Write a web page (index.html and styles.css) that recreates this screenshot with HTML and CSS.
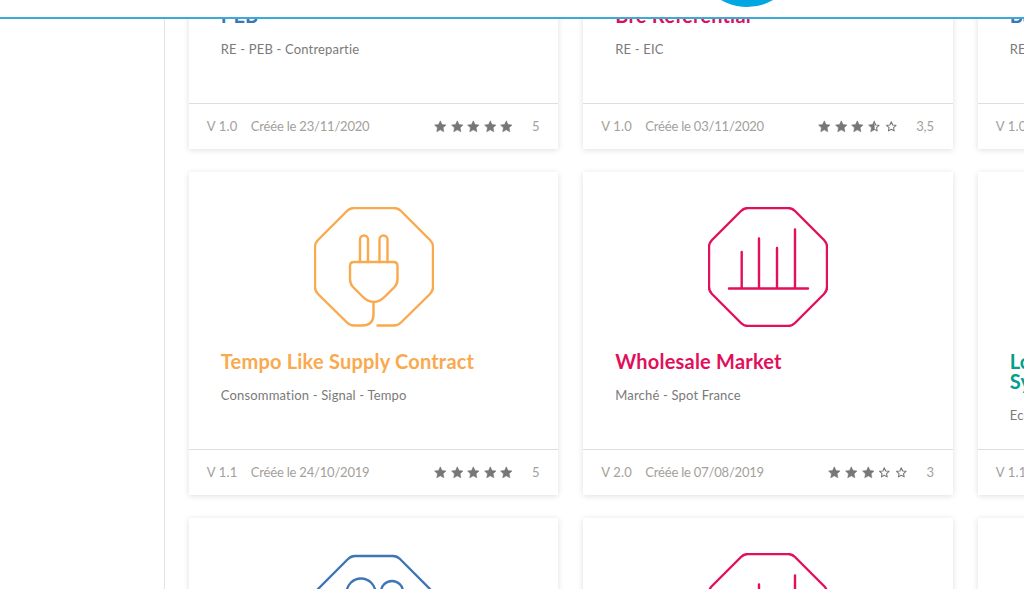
FILE: index.html
```html
<!DOCTYPE html>
<html lang="fr">
<head>
<meta charset="utf-8">
<title>Catalogue</title>
<link rel="stylesheet" href="styles.css">
</head>
<body>
<svg class="defs" aria-hidden="true">
  <symbol id="octagon" viewBox="0 0 120 120"><path d="M40 1H80Q84 1 87 4L116 33Q119 36 119 40V80Q119 84 116 87L87 116Q84 119 80 119H40Q36 119 33 116L4 87Q1 84 1 80V40Q1 36 4 33L33 4Q36 1 40 1Z"/></symbol>
  <symbol id="plug" viewBox="0 0 120 120"><path d="M63.500 118.500H80Q84 118.500 87 115.500L116 87Q119 84 119 80V40Q119 36 116 33L87 4Q84 1 80 1H40Q36 1 33 4L4 33Q1 36 1 40V80Q1 84 4 87L33 115.500Q36 118.500 40 118.500H48Q59.500 118.500 59.500 107V95"/><path d="M46 55V32.500A4 4 0 0 1 54 32.500V55M65.500 55V32.500A4 4 0 0 1 73.500 32.500V55"/><path d="M40 55H79.500Q83.500 55 83.500 59V72Q83.500 77 80.500 80L71 89.500Q65.500 95 60 95Q54 95 48.500 89.500L39 80Q36 77 36 72V59Q36 55 40 55Z"/></symbol>
  <symbol id="bars" viewBox="0 0 120 120"><path d="M40 1H80Q84 1 87 4L116 33Q119 36 119 40V80Q119 84 116 87L87 116Q84 119 80 119H40Q36 119 33 116L4 87Q1 84 1 80V40Q1 36 4 33L33 4Q36 1 40 1Z"/><path d="M21 81.500H100M33.700 81.500V45M51 81.500V31.500M69 81.500V41M87 81.500V22.500"/></symbol>
  <symbol id="sockets" viewBox="0 0 120 120"><path d="M41 3H79Q83 3 86 6L116 36Q119 39 119 43V80Q119 84 116 87L87 116Q84 119 80 119H40Q36 119 33 116L4 87Q1 84 1 80V43Q1 39 4 36L34 6Q37 3 41 3Z"/><circle cx="47" cy="40" r="14.500"/><circle cx="78" cy="39" r="11"/></symbol>
  <symbol id="star" viewBox="0 0 24 24"><path class="solid" d="M12 1.500L15.300 8.500L23 9.500L17.400 14.800L18.800 22.500L12 18.800L5.200 22.500L6.600 14.800L1 9.500L8.700 8.500Z"/></symbol>
  <symbol id="star-empty" viewBox="0 0 24 24"><path class="hollow" d="M12 3.500L14.600 9.400L21 10.200L16.300 14.500L17.500 20.800L12 17.700L6.500 20.800L7.700 14.500L3 10.200L9.400 9.400Z"/></symbol>
  <symbol id="star-half" viewBox="0 0 24 24"><path class="hollow" d="M12 3.500L14.600 9.400L21 10.200L16.300 14.500L17.500 20.800L12 17.700"/><path class="solid" d="M12 1.500V18.800L5.200 22.500L6.600 14.800L1 9.500L8.700 8.500Z"/></symbol>
</svg>

<header class="topbar"><span class="topbar-logo"></span></header>

<div class="app">
  <aside class="sidebar"></aside>
  <main class="grid">

    <article class="card tone-blue">
      <svg class="icon"><use href="#sockets"/></svg>
      <h2 class="title">PEB</h2>
      <p class="subtitle">RE - PEB - Contrepartie</p>
      <footer class="meta">
        <span class="version">V 1.0</span><span class="date">Créée le 23/11/2020</span>
        <span class="stars"><svg><use href="#star"/></svg><svg><use href="#star"/></svg><svg><use href="#star"/></svg><svg><use href="#star"/></svg><svg><use href="#star"/></svg></span>
        <span class="score">5</span>
      </footer>
    </article>

    <article class="card tone-pink">
      <svg class="icon"><use href="#bars"/></svg>
      <h2 class="title">Bre Referential</h2>
      <p class="subtitle">RE - EIC</p>
      <footer class="meta">
        <span class="version">V 1.0</span><span class="date">Créée le 03/11/2020</span>
        <span class="stars"><svg><use href="#star"/></svg><svg><use href="#star"/></svg><svg><use href="#star"/></svg><svg><use href="#star-half"/></svg><svg><use href="#star-empty"/></svg></span>
        <span class="score">3,5</span>
      </footer>
    </article>

    <article class="card tone-blue">
      <svg class="icon"><use href="#sockets"/></svg>
      <h2 class="title">Balancing</h2>
      <p class="subtitle">RE - Balancing</p>
      <footer class="meta">
        <span class="version">V 1.0</span><span class="date">Créée le 03/11/2020</span>
        <span class="stars"><svg><use href="#star"/></svg><svg><use href="#star"/></svg><svg><use href="#star"/></svg><svg><use href="#star"/></svg><svg><use href="#star"/></svg></span>
        <span class="score">5</span>
      </footer>
    </article>

    <article class="card tone-orange">
      <svg class="icon"><use href="#plug"/></svg>
      <h2 class="title">Tempo Like Supply Contract</h2>
      <p class="subtitle">Consommation - Signal - Tempo</p>
      <footer class="meta">
        <span class="version">V 1.1</span><span class="date">Créée le 24/10/2019</span>
        <span class="stars"><svg><use href="#star"/></svg><svg><use href="#star"/></svg><svg><use href="#star"/></svg><svg><use href="#star"/></svg><svg><use href="#star"/></svg></span>
        <span class="score">5</span>
      </footer>
    </article>

    <article class="card tone-pink">
      <svg class="icon"><use href="#bars"/></svg>
      <h2 class="title">Wholesale Market</h2>
      <p class="subtitle">Marché - Spot France</p>
      <footer class="meta">
        <span class="version">V 2.0</span><span class="date">Créée le 07/08/2019</span>
        <span class="stars"><svg><use href="#star"/></svg><svg><use href="#star"/></svg><svg><use href="#star"/></svg><svg><use href="#star-empty"/></svg><svg><use href="#star-empty"/></svg></span>
        <span class="score">3</span>
      </footer>
    </article>

    <article class="card tone-teal">
      <svg class="icon"><use href="#octagon"/></svg>
      <h2 class="title">Local Energy Community<br>System</h2>
      <p class="subtitle">Economie - Local</p>
      <footer class="meta">
        <span class="version">V 1.1</span><span class="date">Créée le 24/10/2019</span>
        <span class="stars"><svg><use href="#star"/></svg><svg><use href="#star"/></svg><svg><use href="#star"/></svg><svg><use href="#star"/></svg><svg><use href="#star"/></svg></span>
        <span class="score">5</span>
      </footer>
    </article>

    <article class="card tone-blue">
      <svg class="icon"><use href="#sockets"/></svg>
    </article>

    <article class="card tone-pink">
      <svg class="icon"><use href="#bars"/></svg>
    </article>

    <article class="card tone-teal">
      <svg class="icon"><use href="#octagon"/></svg>
    </article>

  </main>
</div>
</body>
</html>
```

FILE: styles.css
```css
* { box-sizing: border-box; }

html, body {
  margin: 0;
  height: 589px;
  overflow: hidden;
  background: #fff;
  font-family: "Lato", "Noto Sans", sans-serif;
}

.defs { width: 0; height: 0; position: absolute; }

.solid { fill: #777; stroke: #777; stroke-width: 1; stroke-linejoin: round; }
.hollow { fill: none; stroke: #777; stroke-width: 2; stroke-linejoin: round; }

.topbar {
  position: absolute;
  top: 0;
  left: 0;
  right: 0;
  height: 19px;
  background: #fff;
  border-bottom: 2px solid #3aaadb;
  overflow: hidden;
  z-index: 2;
}

.topbar-logo {
  position: absolute;
  left: 695px;
  top: -97px;
  width: 104px;
  height: 104px;
  border-radius: 50%;
  background: #00a7e1;
}

.app { display: flex; height: 589px; }

.sidebar {
  flex: 0 0 165px;
  border-right: 1px solid #e2e2e2;
}

.grid {
  flex: none;
  display: grid;
  grid-template-columns: repeat(3, 369.5px);
  grid-auto-rows: 323px;
  column-gap: 25px;
  row-gap: 23px;
  margin-top: -174px;
  padding-left: 23.8px;
}

.card {
  display: flex;
  flex-direction: column;
  background: #fff;
  box-shadow: 0 1px 6px rgba(0, 0, 0, .13);
}

.icon {
  flex: none;
  width: 120px;
  height: 120px;
  margin: 35px auto 0;
  fill: none;
  stroke: currentColor;
  stroke-width: 2.4;
  stroke-linecap: round;
  stroke-linejoin: round;
}

.tone-blue { color: #3f75b5; }
.tone-pink { color: #e2105c; }
.tone-orange { color: #f9a94e; }
.tone-teal { color: #00a08c; }

.title {
  margin: 24px 32px 0;
  font-size: 20px;
  line-height: 20px;
  font-weight: 700;
  letter-spacing: .2px;
  white-space: nowrap;
}

.subtitle {
  margin: 15px 32px 0;
  font-size: 13px;
  line-height: 18px;
  letter-spacing: .17px;
  color: #7a7a7a;
}

.meta {
  margin-top: auto;
  display: flex;
  align-items: center;
  height: 46px;
  padding: 0 19px 2px 18px;
  border-top: 1px solid #dfdfdf;
  font-size: 13px;
  letter-spacing: -.15px;
  color: #a3a09b;
}

.version { margin-right: 13.5px; letter-spacing: .15px; }

.date { letter-spacing: -.2px; }

.stars {
  display: flex;
  gap: 4px;
  margin-left: auto;
  margin-top: 2px;
}

.stars svg { display: block; width: 12.6px; height: 12.6px; }

.score {
  margin-left: 19px;
}
```
